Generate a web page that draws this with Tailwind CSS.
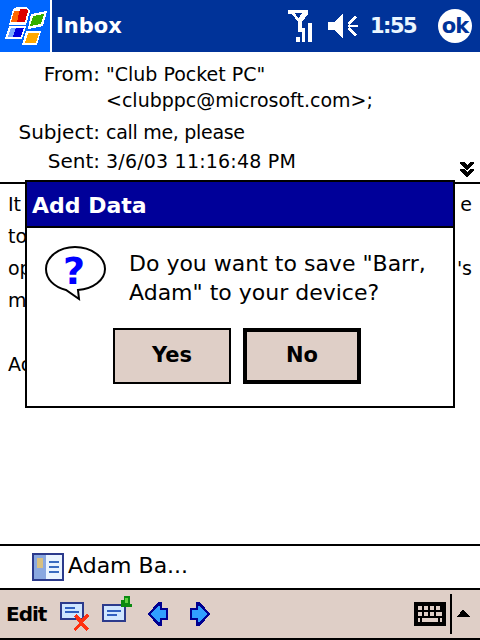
<!DOCTYPE html>
<html lang="en">
<head>
    <meta charset="UTF-8">
    <title>Inbox</title>
    <script src="https://cdn.jsdelivr.net/npm/@tailwindcss/browser@4"></script>
</head>
<body class="bg-white text-black font-['DejaVu_Sans',sans-serif]">
<div class="relative flex flex-col w-[480px] h-[640px] overflow-hidden">

    <!-- title bar -->
    <header class="flex items-center h-[52px] bg-[#003399] text-white shrink-0">
        <div class="flex items-center justify-center w-[50px] h-full bg-[#0066ff]">
            <svg width="44" height="38" viewBox="0 0 44 38" shape-rendering="crispEdges">
                <path d="M10 2l4-2h9l4 4-4 14H6z" fill="#fff"/>
                <path d="M11 4h6l-3 11H8z" fill="#f60"/><path d="M17 2h6l2 2-3 11h-8z" fill="#d00"/>
                <path d="M28 7l16-3-4 15-15 3z" fill="#fff"/><path d="M30 9l11-2-3 10-11 2z" fill="#33b000"/>
                <path d="M6 19h17l-4 13H2z" fill="#fff"/><path d="M8 21h13l-3 9H5z" fill="#0000e0"/><path d="M8 21h5l-3 9H5z" fill="#7aa8ff"/>
                <path d="M23 24h15l-4 14H19z" fill="#fff"/><path d="M25 26h11l-3 10H22z" fill="#ffa800"/>
            </svg>
        </div>
        <div class="w-[2px] h-full bg-white"></div>
        <h1 class="ml-[4px] text-[21px] font-bold leading-none">Inbox</h1>
        <div class="flex-1"></div>
        <svg class="mr-[16px]" width="24" height="32" viewBox="0 0 24 32" shape-rendering="crispEdges" fill="#fff">
            <path d="M0 0h20v4l-6 8v10h-4V12L4 4H0zM7 3l3 5h1l3-5z" fill-rule="evenodd"/>
            <path d="M8 27h4v5H8zM14 18h3v14h-3zM20 13h4v19h-4z"/>
        </svg>
        <svg class="mr-[12px]" width="30" height="24" viewBox="0 0 30 24" fill="#fff" shape-rendering="crispEdges">
            <path d="M0 8h6l9-8v24l-9-8H0z"/>
            <path d="M19 9l8-7 2 2-8 7zM20 11h10v2H20zM19 15l2-2 8 7-2 2z"/>
        </svg>
        <span class="w-[46px] text-[21px] font-bold leading-none tracking-[-1.5px] text-[#eaf6ff]">1:55</span>
        <div class="ml-[22px] mr-[8px] flex items-center justify-center w-[34px] h-[34px] rounded-full bg-white text-[#003399] text-[21px] font-bold leading-none tracking-[-1px]">ok</div>
    </header>

    <!-- message details -->
    <section class="relative h-[132px] shrink-0 border-b-2 border-black text-[19px] leading-[30px]">
        <div class="grid grid-cols-[100px_1fr] gap-x-[6px] pt-[7px]">
            <span class="text-right text-[20px]">From:</span>
            <div class="leading-[26px] pt-[2px]">"Club Pocket PC"<br>&lt;clubppc@microsoft.com&gt;;</div>
            <span class="text-right text-[20px] mt-[4px]">Subject:</span>
            <span class="mt-[4px] tracking-[-0.3px]">call me, please</span>
            <span class="text-right text-[20px] -mt-[1px]">Sent:</span>
            <span class="-mt-[1px] tracking-[0.2px]">3/6/03 11:16:48 PM</span>
        </div>
        <svg class="absolute right-[6px] bottom-[4px]" width="14" height="16" viewBox="0 0 14 16" shape-rendering="crispEdges">
            <path d="M0 0h4l3 3 3-3h4v2l-7 6-7-6zM0 7h4l3 3 3-3h4v2l-7 6-7-6z"/>
        </svg>
    </section>

    <!-- message body, mostly covered by the dialog -->
    <section class="flex-1 px-[8px] pt-[4px] text-[19px] leading-[32px]">
        <div class="flex justify-between"><span>It</span><span>e</span></div>
        <div>to</div>
        <div class="flex justify-between"><span>op</span><span>'s</span></div>
        <div>m</div>
        <div class="mt-[32px]">Ad</div>
    </section>

    <!-- attachment row -->
    <div class="flex items-center h-[44px] border-t-2 border-black pl-[32px] text-[22px] shrink-0">
        <svg width="32" height="28" viewBox="0 0 32 28" shape-rendering="crispEdges">
            <path d="M0 0h32v28H0z" fill="#2b3a8c"/>
            <path d="M2 2h12v24H2z" fill="#8aa8e0"/><path d="M14 2h16v24H14z" fill="#eaf4ff"/>
            <path d="M5 5h6v10H5z" fill="#d8c080"/>
            <path d="M17 8h10v2H17zM17 13h10v2H17zM17 18h10v2H17z" fill="#3a6cc0"/>
        </svg>
        <span class="ml-[4px] leading-none -mt-[2px]">Adam Ba...</span>
    </div>

    <!-- command bar -->
    <footer class="flex items-center h-[52px] bg-[#dfcfc7] border-y-2 border-black shrink-0 pl-[6px]">
        <span class="w-[42px] text-[20px] font-bold leading-none tracking-[-1px]">Edit</span>
        <svg class="ml-[12px] mt-[6px]" width="30" height="30" viewBox="0 0 30 30" shape-rendering="crispEdges">
            <path d="M0 0h24v18H0z" fill="#2b3a8c"/><path d="M2 2h20v14H2z" fill="#cfe6ff"/>
            <path d="M5 5h10v2H5zM5 9h14v2H5z" fill="#2f5fc0"/>
            <path d="M14 14l2-2 5 5 6-5 2 2-6 6 6 7-3 2-5-6-6 6-2-2 6-6z" fill="#ff3010"/>
        </svg>
        <svg class="ml-[12px] -mt-[8px]" width="30" height="28" viewBox="0 0 30 28" shape-rendering="crispEdges">
            <path d="M0 8h24v18H0z" fill="#2b3a8c"/><path d="M2 10h20v14H2z" fill="#cfe6ff"/>
            <path d="M5 14h14v2H5zM5 18h10v2H5z" fill="#2f5fc0"/>
            <path d="M19 4h3V0h6v8h2v3H19z" fill="#0a8a10"/><path d="M23 2h3v5h-3z" fill="#60d040"/>
        </svg>
        <svg class="ml-[16px]" width="20" height="24" viewBox="0 0 20 24" shape-rendering="crispEdges">
            <path d="M10 0h4v6h6v12h-6v6h-4L0 12z" fill="#000090"/><path d="M10 4h2v4h6v8h-6v4h-2L3 12z" fill="#30a0ff"/>
        </svg>
        <svg class="ml-[22px]" width="20" height="24" viewBox="0 0 20 24" shape-rendering="crispEdges">
            <path d="M10 0H6v6H0v12h6v6h4l10-12z" fill="#000090"/><path d="M10 4H8v4H2v8h6v4h2l7-8z" fill="#30a0ff"/>
        </svg>
        <div class="flex-1"></div>
        <svg width="32" height="24" viewBox="0 0 32 24" shape-rendering="crispEdges">
            <path d="M0 0h32v24H0z"/>
            <path d="M4 4h4v4H4zM10 4h4v4h-4zM16 4h4v4h-4zM22 4h4v4h-4zM4 10h4v4H4zM10 10h4v4h-4zM16 10h4v4h-4zM22 10h6v4h-6zM4 16h2v4H4zM8 16h16v4H8zM26 16h2v4h-2z" fill="#dfcfc7"/>
        </svg>
        <div class="ml-[4px] w-[2px] h-[40px] bg-black"></div>
        <svg class="ml-[4px] mr-[10px] -mt-[2px]" width="14" height="8" viewBox="0 0 14 8" shape-rendering="crispEdges"><path d="M0 8l2-2 2-2 3-4 3 4 2 2 2 2z"/></svg>
    </footer>

    <!-- dialog -->
    <div class="absolute left-[25px] top-[180px] w-[430px] h-[228px] bg-white border-2 border-black" role="dialog">
        <div class="flex items-center h-[44px] bg-[#000099] text-white pl-[5px] pt-[3px] text-[22px] font-bold leading-none">Add Data</div>
        <div class="h-[2px] bg-black"></div>
        <div class="flex pl-[18px] pt-[18px]">
            <svg width="62" height="62" viewBox="0 0 62 62" class="shrink-0">
                <path d="M30 1C14 1 1 11 1 23c0 10 8 18 20 21l13 9 -1-9C48 43 60 34 60 23 60 11 46 1 30 1z" fill="#fff" stroke="#000" stroke-width="2"/>
            </svg>
            <p class="ml-[22px] pt-[3px] text-[22px] leading-[29px]">Do you want to save "Barr,<br>Adam" to your device?</p>
        </div>
        <div class="flex gap-[12px] mt-[20px] pl-[86px] text-[21px] font-bold">
            <button class="w-[118px] h-[56px] bg-[#dfcfc7] border-2 border-black">Yes</button>
            <button class="w-[118px] h-[56px] bg-[#dfcfc7] border-4 border-black">No</button>
        </div>
    </div>
    <span class="absolute left-[63px] top-[249px] text-[#0000ff] text-[38px] font-bold leading-[44px]">?</span>
</div>
</body>
</html>
